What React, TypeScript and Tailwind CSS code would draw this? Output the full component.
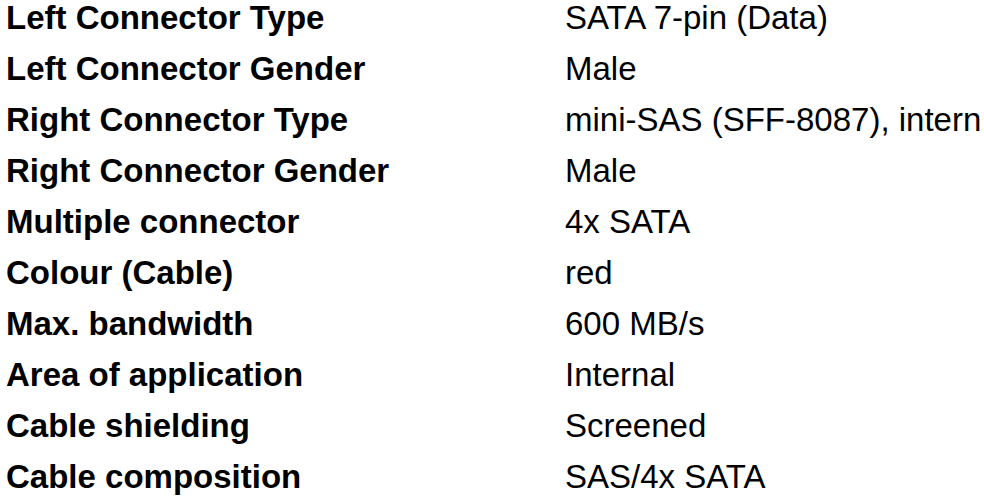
import React from "react";

const rows: [string, string][] = [
  ["Left Connector Type", "SATA 7-pin (Data)"],
  ["Left Connector Gender", "Male"],
  ["Right Connector Type", "mini-SAS (SFF-8087), intern"],
  ["Right Connector Gender", "Male"],
  ["Multiple connector", "4x SATA"],
  ["Colour (Cable)", "red"],
  ["Max. bandwidth", "600 MB/s"],
  ["Area of application", "Internal"],
  ["Cable shielding", "Screened"],
  ["Cable composition", "SAS/4x SATA"],
];

export default function App() {
  return (
    <div
      className="w-[984px] h-[502px] bg-white text-black overflow-hidden pt-[1px]"
      style={{ fontFamily: '"Liberation Sans", Arial, sans-serif' }}
    >
      <div className="flex flex-col pl-[6px]">
        {rows.map(([k, v]) => (
          <div key={k} className="flex h-[51px] text-[33px] leading-[33px]">
            <div className="w-[559px] font-bold">{k}</div>
            <div className="font-normal">{v}</div>
          </div>
        ))}
      </div>
    </div>
  );
}
